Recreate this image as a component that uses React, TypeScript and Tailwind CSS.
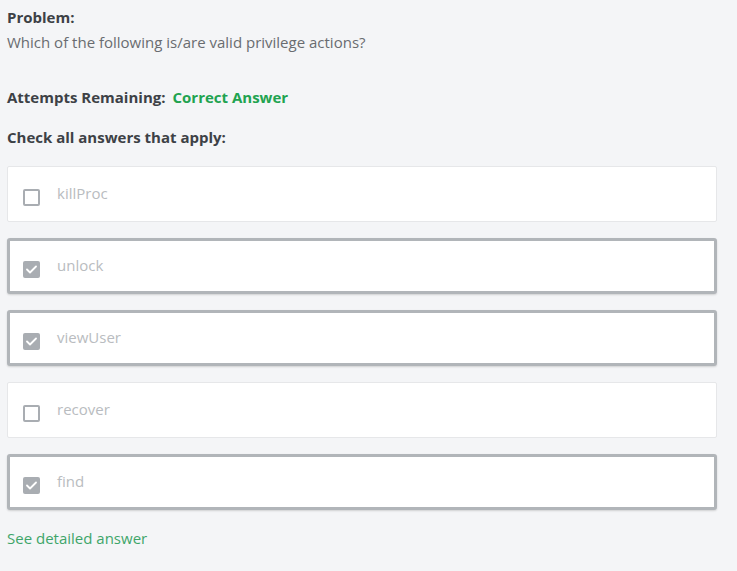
import React from 'react';

type Option = {
  label: string;
  checked: boolean;
};

const options: Option[] = [
  { label: 'killProc', checked: false },
  { label: 'unlock', checked: true },
  { label: 'viewUser', checked: true },
  { label: 'recover', checked: false },
  { label: 'find', checked: true },
];

function CheckBox({ checked }: { checked: boolean }) {
  if (checked) {
    return (
      <span className="flex h-[17px] w-[17px] items-center justify-center rounded-[2px] bg-[#a9adb2]">
        <svg width="11" height="9" viewBox="0 0 11 9" fill="none">
          <path d="M1 4.5 L4 7.5 L10 1.5" stroke="#fff" strokeWidth="1.8" strokeLinecap="round" strokeLinejoin="round" />
        </svg>
      </span>
    );
  }
  return <span className="block h-[17px] w-[17px] rounded-[2px] border-2 border-[#a9adb2] bg-white" />;
}

function AnswerRow({ option }: { option: Option }) {
  return (
    <div
      className={
        option.checked
          ? 'flex h-[56px] items-center rounded-[3px] border-[3px] border-[#b1b5b9] bg-white pl-[13px] shadow-[0_1px_2px_rgba(0,0,0,0.15)]'
          : 'flex h-[56px] items-center rounded-[2px] border border-[#e6e7e9] bg-white pl-[15px]'
      }
    >
      <div className="mt-[6px]">
        <CheckBox checked={option.checked} />
      </div>
      <span className="mb-[2px] ml-[17px] text-[15px] text-[#b9bcc0]">{option.label}</span>
    </div>
  );
}

export default function App() {
  return (
    <div className="min-h-[571px] w-[737px] bg-[#f4f5f7] pl-[7px] pr-[20px] pt-[7px] font-['Open_Sans',sans-serif] text-[15px]">
      <h2 className="font-bold leading-[20px] text-[#3d4146]">Problem:</h2>
      <p className="mt-[5px] leading-[20px] text-[#696c70]">Which of the following is/are valid privilege actions?</p>

      <div className="mt-[35px] flex items-center gap-[7px] leading-[20px]">
        <span className="font-bold text-[#3d4146]">Attempts Remaining:</span>
        <span className="font-bold text-[#21a350]">Correct Answer</span>
      </div>

      <h3 className="mt-[20px] font-bold leading-[20px] text-[#3d4146]">Check all answers that apply:</h3>

      <div className="mt-[19px] flex flex-col gap-[16px]">
        {options.map((option) => (
          <AnswerRow key={option.label} option={option} />
        ))}
      </div>

      <a className="mt-[18px] block leading-[20px] text-[#3ea56a]" href="#">
        See detailed answer
      </a>
    </div>
  );
}
